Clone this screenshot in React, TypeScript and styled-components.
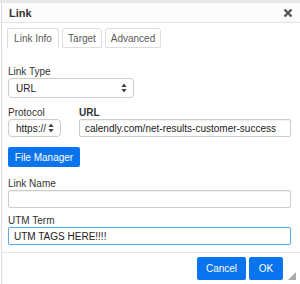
import * as React from "react";
import styled, { createGlobalStyle } from "styled-components";

const GlobalStyle = createGlobalStyle`
  *, *::before, *::after {
    box-sizing: border-box;
  }
  html, body {
    margin: 0;
    padding: 0;
    width: 300px;
    height: 284px;
    overflow: hidden;
    background: #ffffff;
    font-family: "Liberation Sans", Arial, sans-serif;
  }
`;

const colors = {
  text: "#333333",
  muted: "#5a5a5a",
  border: "#cccccc",
  line: "#e5e5e5",
  blue: "#0a74ee",
  focus: "#5aa9ea",
};

const Backdrop = styled.div`
  height: 3px;
  background: #e9e7ea;
`;

const Dialog = styled.div`
  height: 281px;
  border-left: 1px solid #dddddd;
  margin-left: 1px;
  display: flex;
  flex-direction: column;
  background: #ffffff;
`;

const Header = styled.div`
  height: 20px;
  display: flex;
  align-items: center;
  justify-content: space-between;
  padding: 0 7px 0 7px;
  border-bottom: 1px solid ${colors.line};
  background: #fcfcfc;
`;

const Title = styled.span`
  font-size: 11px;
  font-weight: bold;
  color: ${colors.text};
`;

const TabList = styled.div`
  display: flex;
  gap: 3px;
  padding: 5px 0 0 5px;
`;

const Tab = styled.div<{ $active?: boolean; $width: number }>`
  height: 20px;
  width: ${(p) => p.$width}px;
  display: flex;
  align-items: center;
  justify-content: center;
  font-size: 10px;
  color: ${colors.muted};
  border: 1px solid #dedede;
  border-bottom: ${(p) => (p.$active ? "none" : "1px solid #dedede")};
  border-radius: 3px 3px 0 0;
  background: #ffffff;
`;

const Body = styled.div`
  flex: 1;
  padding: 0 9px 0 6px;
  display: flex;
  flex-direction: column;
`;

const Field = styled.div<{ $top: number }>`
  display: flex;
  flex-direction: column;
  margin-top: ${(p) => p.$top}px;
`;

const Label = styled.label<{ $bold?: boolean }>`
  font-size: 10px;
  line-height: 12px;
  height: 12px;
  color: ${colors.text};
  font-weight: ${(p) => (p.$bold ? "bold" : "normal")};
`;

const Row = styled.div`
  display: flex;
  gap: 18px;
  margin-top: 9px;
`;

const SelectBox = styled.div<{ $width: number; $height: number }>`
  width: ${(p) => p.$width}px;
  height: ${(p) => p.$height}px;
  border: 1px solid ${colors.border};
  border-radius: 4px;
  display: flex;
  align-items: center;
  justify-content: space-between;
  padding: 0 6px 0 7px;
  font-size: 10px;
  color: #222222;
  background: #ffffff;
`;

const TextInput = styled.div<{ $focused?: boolean }>`
  height: 18px;
  border: 1px solid ${(p) => (p.$focused ? colors.focus : colors.border)};
  border-radius: 2px;
  box-shadow: ${(p) =>
    p.$focused ? "0 0 1px rgba(90,169,234,0.6)" : "inset 0 1px 1px rgba(0,0,0,0.06)"};
  display: flex;
  align-items: center;
  padding: 0 5px;
  font-size: 10px;
  color: #222222;
  white-space: nowrap;
  overflow: hidden;
`;

const BlueButton = styled.button`
  border: none;
  border-radius: 2px;
  background: ${colors.blue};
  color: #ffffff;
  font-family: "Liberation Sans", Arial, sans-serif;
  font-size: 10px;
  padding: 0;
  cursor: pointer;
`;

const FileButton = styled(BlueButton)`
  align-self: flex-start;
  margin-top: 10px;
  width: 72px;
  height: 20px;
`;

const Footer = styled.div`
  height: 32px;
  border-top: 1px solid ${colors.line};
  display: flex;
  align-items: flex-start;
  justify-content: flex-end;
  gap: 3px;
  padding: 4px 17px 0 0;
  position: relative;
`;

const FooterButton = styled(BlueButton)<{ $width: number }>`
  height: 23px;
  width: ${(p) => p.$width}px;
  font-size: 10px;
`;

const ResizeHandle = styled.div`
  position: absolute;
  right: 4px;
  bottom: 4px;
  width: 0;
  height: 0;
  border-left: 8px solid transparent;
  border-bottom: 8px solid #aaaaaa;
`;

const UpDown = () => (
  <svg width="6" height="10" viewBox="0 0 6 10">
    <path d="M3 0.5 L5.6 4 H0.4 Z" fill="#444" />
    <path d="M3 9.5 L5.6 6 H0.4 Z" fill="#444" />
  </svg>
);

const CloseIcon = () => (
  <svg width="10" height="10" viewBox="0 0 10 10">
    <path d="M1.5 1.5 L8.5 8.5 M8.5 1.5 L1.5 8.5" stroke="#555" strokeWidth="2.4" />
  </svg>
);

export default function App() {
  return (
    <>
      <GlobalStyle />
      <Backdrop />
      <Dialog>
        <Header>
          <Title>Link</Title>
          <CloseIcon />
        </Header>
        <TabList>
          <Tab $active $width={52}>Link Info</Tab>
          <Tab $width={40}>Target</Tab>
          <Tab $width={56}>Advanced</Tab>
        </TabList>
        <Body>
          <Field $top={18}>
            <Label>Link Type</Label>
            <SelectBox $width={126} $height={20}>
              URL
              <UpDown />
            </SelectBox>
          </Field>
          <Row>
            <Field $top={0}>
              <Label>Protocol</Label>
              <SelectBox $width={53} $height={18}>
                https://
                <UpDown />
              </SelectBox>
            </Field>
            <Field $top={0} style={{ flex: 1 }}>
              <Label $bold>URL</Label>
              <TextInput>calendly.com/net-results-customer-success</TextInput>
            </Field>
          </Row>
          <FileButton>File Manager</FileButton>
          <Field $top={11}>
            <Label>Link Name</Label>
            <TextInput />
          </Field>
          <Field $top={7}>
            <Label>UTM Term</Label>
            <TextInput $focused>UTM TAGS HERE!!!!</TextInput>
          </Field>
        </Body>
        <Footer>
          <FooterButton $width={49}>Cancel</FooterButton>
          <FooterButton $width={34}>OK</FooterButton>
          <ResizeHandle />
        </Footer>
      </Dialog>
    </>
  );
}
